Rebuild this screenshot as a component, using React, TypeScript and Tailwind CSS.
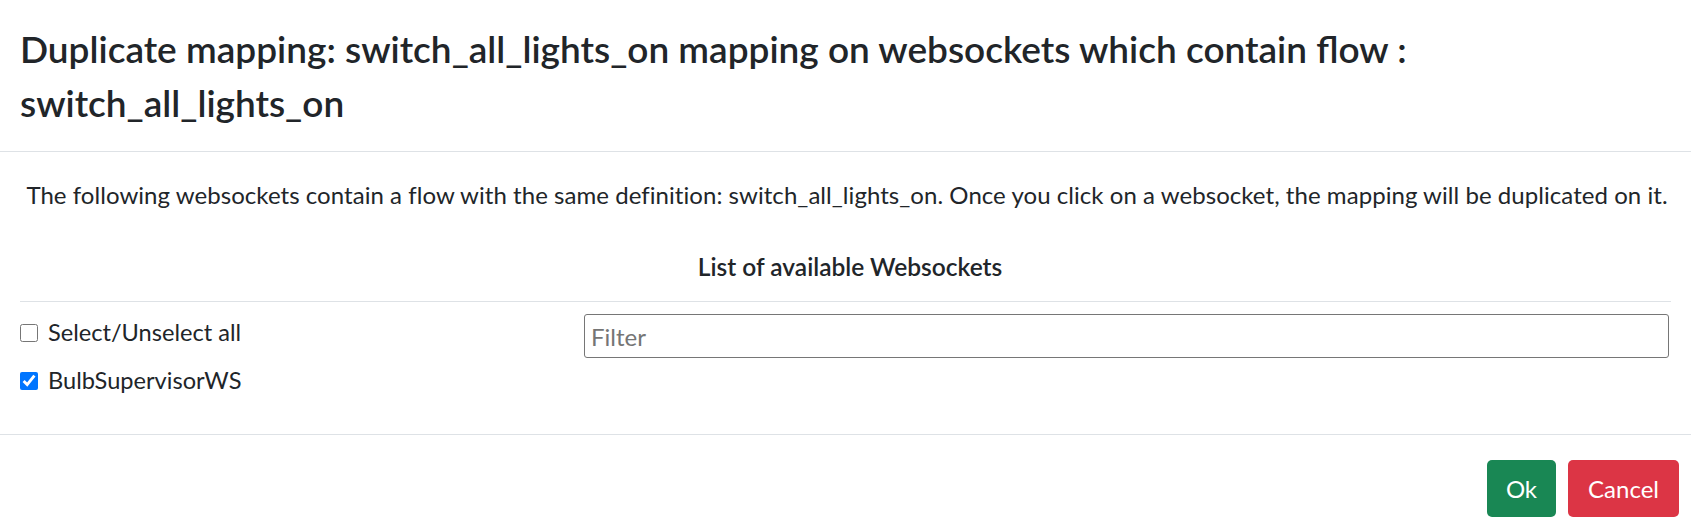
import React from "react";

export default function App() {
  return (
    <div className="w-[1691px] h-[532px] bg-white text-[#212529] font-['Lato','Open_Sans',sans-serif] flex flex-col overflow-hidden">
      {/* Header */}
      <div className="h-[152px] border-b border-[#dee2e6] px-[20px] pt-[22px]">
        <h4 className="text-[37px] leading-[54px] font-semibold">
          Duplicate mapping: switch_all_lights_on mapping on websockets which contain flow :
          switch_all_lights_on
        </h4>
      </div>

      {/* Body */}
      <div className="h-[282px] px-[20px] pt-[25px] flex flex-col">
        <p className="text-center text-[24px] leading-[36px] tracking-[0.05px] pl-[3px]">
          The following websockets contain a flow with the same definition: switch_all_lights_on. Once you click on a websocket, the mapping will be duplicated on it.
        </p>
        <div className="mt-[36px] text-center text-[24.5px] leading-[36px] font-semibold pl-[9px]">
          List of available Websockets
        </div>
        <div className="mt-[16px] border-t border-[#dee2e6]" />
        <div className="flex">
          <div className="w-[564px] pt-[7px] flex flex-col">
            <label className="h-[48px] flex items-center gap-[10px] text-[23.6px]">
              <input type="checkbox" readOnly className="w-[18px] h-[18px] m-0" />
              <span>Select/Unselect all</span>
            </label>
            <label className="h-[48px] flex items-center gap-[10px] text-[23.6px]">
              <input type="checkbox" checked readOnly className="w-[18px] h-[18px] m-0 accent-[#0075ff]" />
              <span>BulbSupervisorWS</span>
            </label>
          </div>
          <div className="flex-1 pt-[12px] pr-[2px]">
            <input
              type="text"
              placeholder="Filter"
              className="w-full h-[44px] border border-[#767676] rounded-[3px] px-[6px] text-[24px] placeholder:text-[#757575] outline-none"
            />
          </div>
        </div>
      </div>

      {/* Footer */}
      <div className="flex-1 border-t border-[#dee2e6] flex justify-end items-start pt-[25px] pr-[12px] gap-[12px]">
        <button className="h-[57px] px-[19px] rounded-[5px] bg-[#198754] text-white text-[24px]">Ok</button>
        <button className="h-[57px] px-[20px] rounded-[5px] bg-[#dc3545] text-white text-[24px]">Cancel</button>
      </div>
    </div>
  );
}
